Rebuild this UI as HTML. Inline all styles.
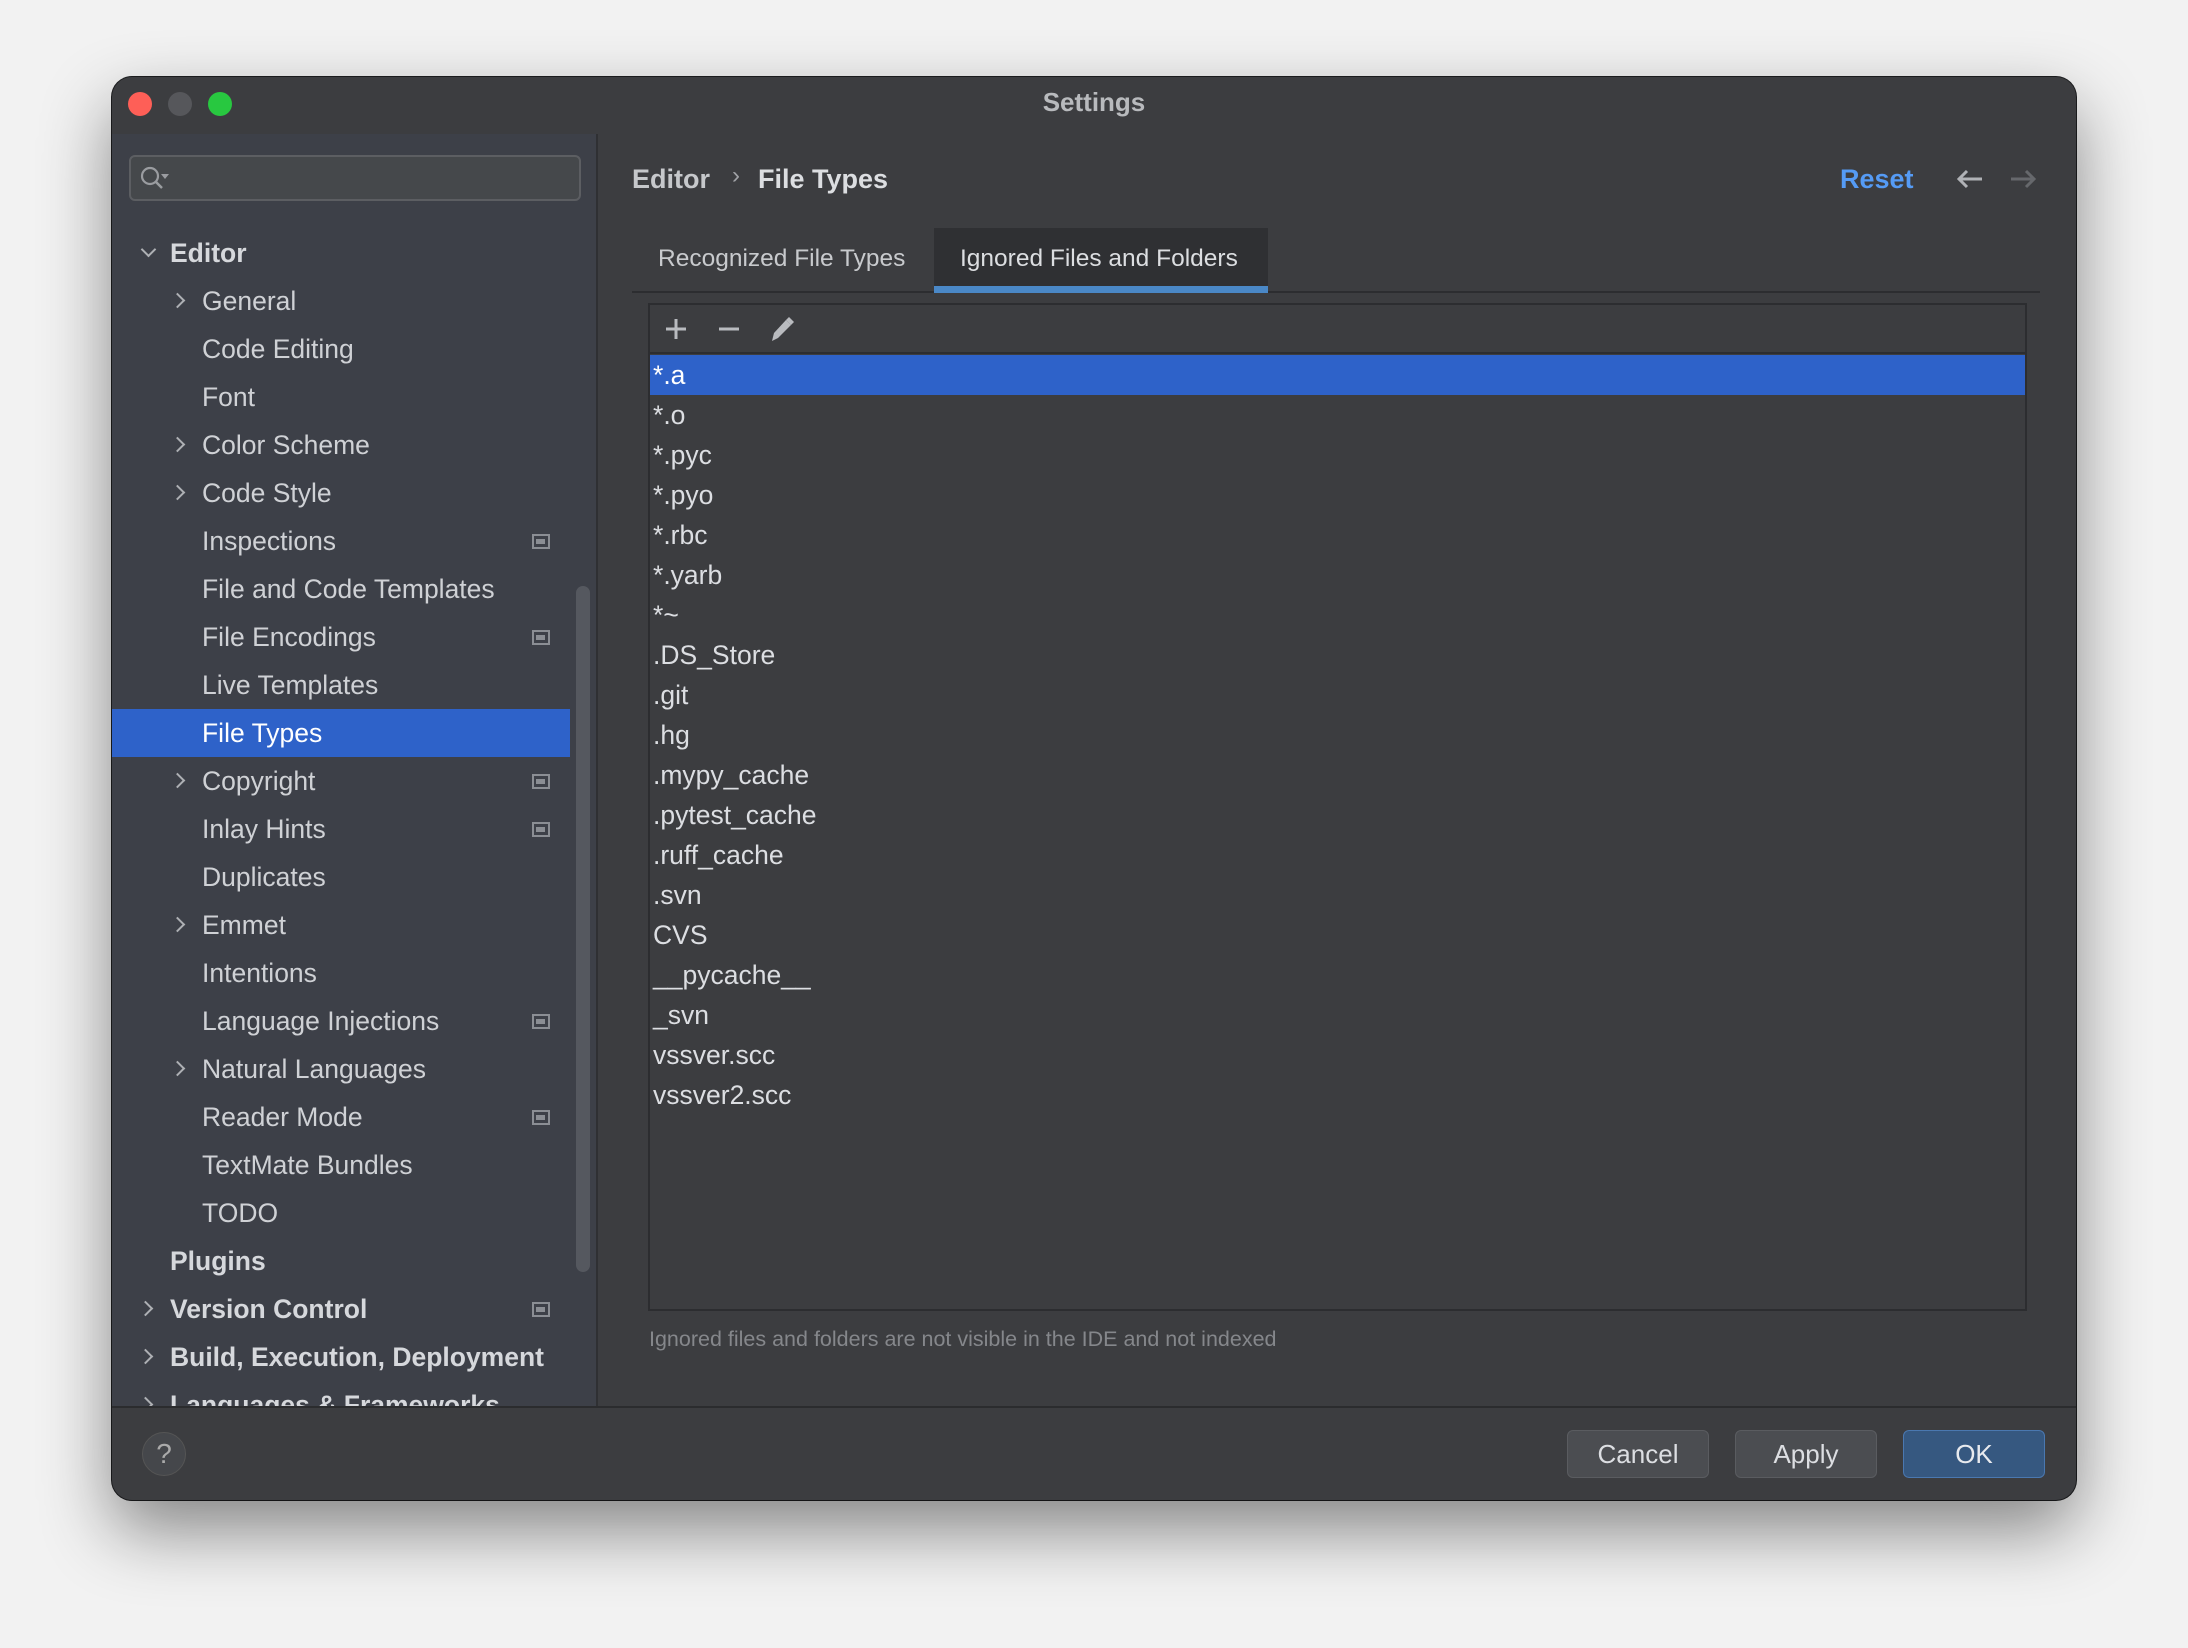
<!DOCTYPE html>
<html><head><meta charset="utf-8"><style>
*{margin:0;padding:0;box-sizing:border-box}
body{width:2188px;height:1648px;background:#f2f2f2;position:relative;overflow:hidden;font-family:"Liberation Sans",sans-serif;color:#d4d6da}
.win{position:absolute;left:112px;top:77px;width:1964px;height:1423px;background:#3c3d40;border-radius:20px;overflow:hidden;box-shadow:0 30px 70px rgba(0,0,0,.45),0 0 0 1px #1e1f21}
.a{position:absolute}
.tl{position:absolute;top:15px;width:24px;height:24px;border-radius:50%}
.side{position:absolute;left:0;top:57px;width:486px;height:1273px;background:#3d4048;border-right:2px solid #2f3033}
.it{position:absolute;font-size:26.5px;line-height:48px;height:48px;white-space:nowrap;color:#cfd1d5}
.b{font-weight:bold}
.chev{position:absolute;width:11px;height:11px;border-right:2.5px solid #aeb0b4;border-bottom:2.5px solid #aeb0b4}
.ic{position:absolute;left:420px;width:18px;height:15px;border:2.5px solid #8b8e94;background:#3d4048}
.ic:after{content:"";position:absolute;left:2px;top:3px;width:9px;height:5px;background:#8b8e94}
.row{position:absolute;left:0;height:40px;line-height:40px;font-size:26.5px;padding-left:3px;color:#dcdee2;width:100%}
.btn{position:absolute;top:1353px;width:142px;height:48px;border-radius:6px;background:#4b4d51;border:1px solid #5a5c60;font-size:26px;line-height:46px;text-align:center;color:#dcdee2}
</style></head><body>
<div class="win">
 <div class="tl" style="left:16px;background:#fe5f57"></div>
 <div class="tl" style="left:56px;background:#56575b"></div>
 <div class="tl" style="left:96px;background:#28c840"></div>
 <div class="a" style="left:0;width:100%;top:10px;text-align:center;font-size:26px;font-weight:bold;color:#b8babd">Settings</div>

 <div class="side">
  <div class="a" style="left:17px;top:21px;width:452px;height:46px;border:2px solid #5c5e62;border-radius:6px;background:#45484b">
   <svg class="a" style="left:8px;top:8px" width="40" height="28" viewBox="0 0 40 28"><circle cx="11" cy="11" r="8" fill="none" stroke="#9a9ca0" stroke-width="2.2"/><path d="M17 17l6 6" stroke="#9a9ca0" stroke-width="2.5"/><path d="M22 9h8l-4 5z" fill="#9a9ca0"/></svg>
  </div>
  <div class="a" style="left:0;top:575px;width:458px;height:48px;background:#2e62c9"></div>
  <div class="a" style="left:464px;top:452px;width:14px;height:686px;border-radius:7px;background:#55585f"></div>
 </div>
 <div id="tree"></div>

 <div class="a b" style="left:520px;top:87px;font-size:27px;color:#c6c8cb">Editor</div>
 <div class="a" style="left:620px;top:85px;font-size:24px;color:#a0a2a6">›</div>
 <div class="a b" style="left:646px;top:87px;font-size:27px;color:#dcdee1">File Types</div>
 <div class="a b" style="left:1728px;top:87px;font-size:27px;color:#559bf5">Reset</div>
 <svg class="a" style="left:1843px;top:91px" width="30" height="22" viewBox="0 0 30 22"><path d="M27 11H4M12 3l-8 8 8 8" fill="none" stroke="#b0b2b6" stroke-width="3"/></svg>
 <svg class="a" style="left:1896px;top:91px" width="30" height="22" viewBox="0 0 30 22"><path d="M3 11h23M18 3l8 8-8 8" fill="none" stroke="#66686c" stroke-width="3"/></svg>

 <div class="a" style="left:520px;top:214px;width:1408px;height:2px;background:#2c2d30"></div>
 <div class="a" style="left:822px;top:151px;width:334px;height:65px;background:#2f3033"></div>
 <div class="a" style="left:822px;top:209px;width:334px;height:7px;background:#4a88c7"></div>
 <div class="a" style="left:546px;top:168px;font-size:24.5px;color:#c8cacd">Recognized File Types</div>
 <div class="a" style="left:848px;top:168px;font-size:24.5px;color:#dcdee1">Ignored Files and Folders</div>

 <div class="a" style="left:536px;top:226px;width:1379px;height:1008px;border:2px solid #2c2d30;background:#3c3d40;overflow:hidden">
  <div class="a" style="left:0;top:0;width:100%;height:49px;border-bottom:2px solid #2c2d30"></div>
  <svg class="a" style="left:12px;top:10px" width="140" height="28" viewBox="0 0 140 28"><path d="M14 4v20M4 14h20" stroke="#b9bbbf" stroke-width="3"/><path d="M57 14h20" stroke="#b9bbbf" stroke-width="3"/><path d="M110 26l2-8 12-13 5 5-13 13z" fill="#b9bbbf"/><path d="M124 5l3-3 5 5-3 3z" fill="#b9bbbf"/></svg>
  <div id="list" class="a" style="left:0;top:50px;width:100%"></div>
 </div>
 <div class="a" style="left:537px;top:1250px;font-size:21.5px;color:#85878b">Ignored files and folders are not visible in the IDE and not indexed</div>

 <div class="a" style="left:0;top:1329px;width:100%;height:2px;background:#2b2c2e"></div>
 <div class="a" style="left:30px;top:1355px;width:44px;height:44px;border-radius:50%;background:#45474b;border:1px solid #555;text-align:center;line-height:42px;font-size:28px;color:#aaa">?</div>
 <div class="btn" style="left:1455px">Cancel</div>
 <div class="btn" style="left:1623px">Apply</div>
 <div class="btn" style="left:1791px;background:#365880;border-color:#4a78b0;color:#e8eaee">OK</div>
</div>
<script>
var items=[["Editor",0,1,"d",0],["General",1,0,"r",0],["Code Editing",1,0,"",0],["Font",1,0,"",0],["Color Scheme",1,0,"r",0],["Code Style",1,0,"r",0],["Inspections",1,0,"",1],["File and Code Templates",1,0,"",0],["File Encodings",1,0,"",1],["Live Templates",1,0,"",0],["File Types",1,0,"",0],["Copyright",1,0,"r",1],["Inlay Hints",1,0,"",1],["Duplicates",1,0,"",0],["Emmet",1,0,"r",0],["Intentions",1,0,"",0],["Language Injections",1,0,"",1],["Natural Languages",1,0,"r",0],["Reader Mode",1,0,"",1],["TextMate Bundles",1,0,"",0],["TODO",1,0,"",0],["Plugins",0,1,"",0],["Version Control",0,1,"r",1],["Build, Execution, Deployment",0,1,"r",0],["Languages & Frameworks",0,1,"r",0]];
var h="";
items.forEach(function(t,i){var top=152+i*48;var x=t[1]?90:58;var col=i==10?"#fff":(t[2]?"#d6d8dc":"#cfd1d5");
h+='<div class="it'+(t[2]?' b':'')+'" style="left:'+x+'px;top:'+top+'px;color:'+col+'">'+t[0].replace('&','&amp;')+'</div>';
var cx=x-28;
if(t[3]=="r")h+='<div class="chev" style="left:'+(cx-2)+'px;top:'+(top+18)+'px;transform:rotate(-45deg)"></div>';
if(t[3]=="d")h+='<div class="chev" style="left:'+(cx+1)+'px;top:'+(top+15)+'px;transform:rotate(45deg)"></div>';
if(t[4])h+='<div class="ic" style="top:'+(top+17)+'px"></div>';});
h='<div class="a" style="left:0;top:0;width:486px;height:1329px;overflow:hidden">'+h+'</div>';
document.getElementById("tree").outerHTML=h;
var L=["*.a","*.o","*.pyc","*.pyo","*.rbc","*.yarb","*~",".DS_Store",".git",".hg",".mypy_cache",".pytest_cache",".ruff_cache",".svn","CVS","__pycache__","_svn","vssver.scc","vssver2.scc"];
var s="";L.forEach(function(t,i){s+='<div class="row" style="top:'+(i*40)+'px;'+(i==0?'background:#2e62c9;color:#fff':'')+'">'+t+'</div>';});
document.getElementById("list").innerHTML=s;
</script>
</body></html>
